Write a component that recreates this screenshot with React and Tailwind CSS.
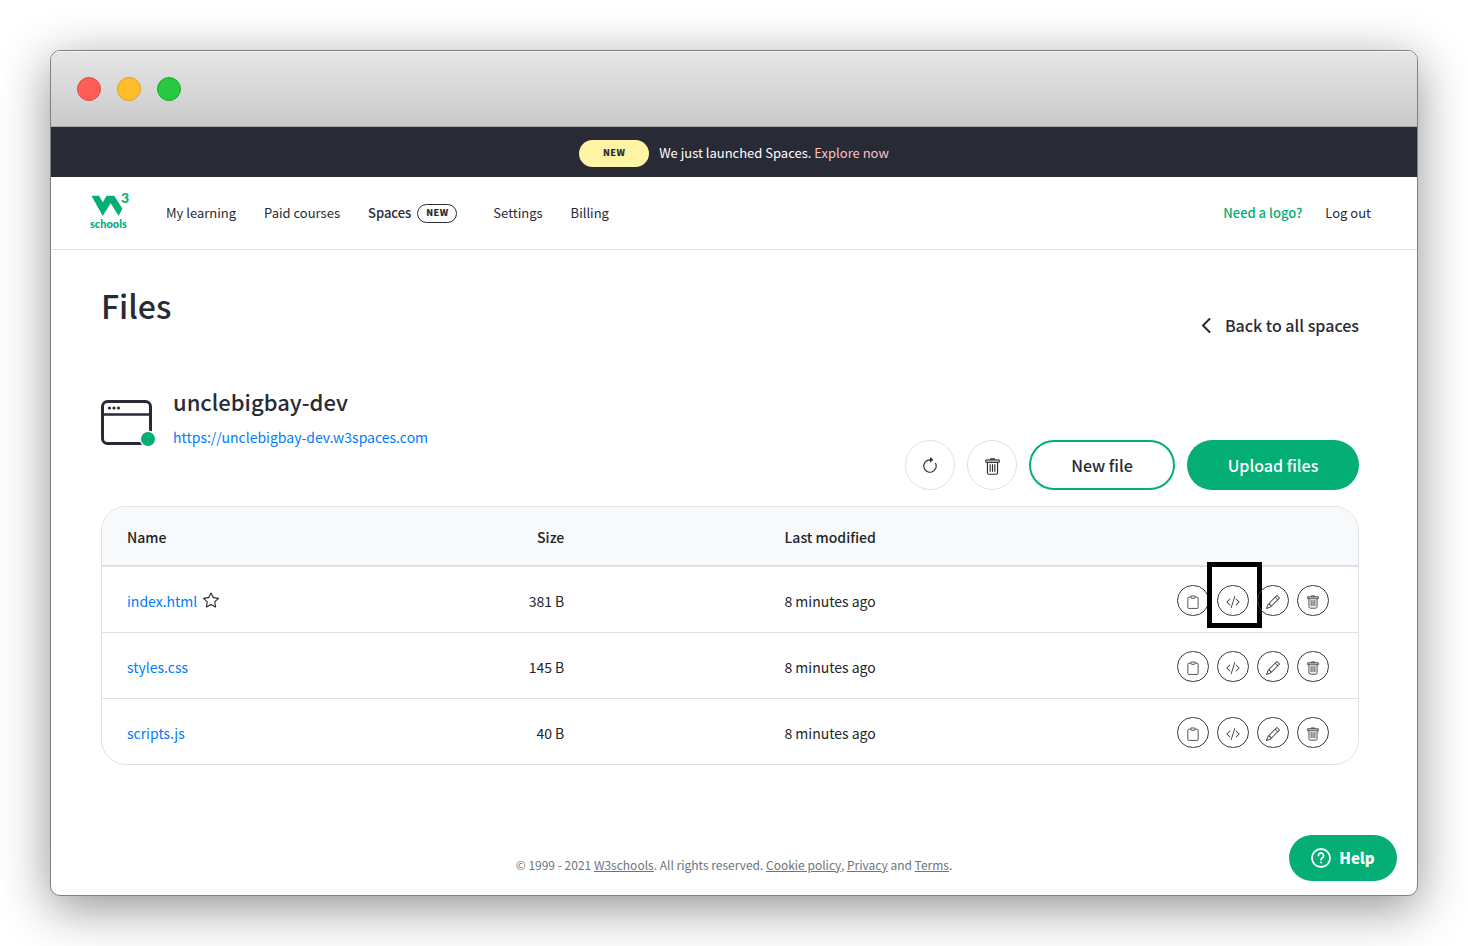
import { BsArrowClockwise, BsCodeSlash, BsPencil, BsStar } from 'react-icons/bs';

const files = [
  { name: 'index.html', size: '381 B', modified: '8 minutes ago', starred: true },
  { name: 'styles.css', size: '145 B', modified: '8 minutes ago' },
  { name: 'scripts.js', size: '40 B', modified: '8 minutes ago' },
];

function TrashIcon({ className = '' }) {
  return (
    <svg viewBox="0 0 16 18" fill="none" stroke="currentColor" className={className} aria-hidden="true">
      <path d="M5.5 1h5" strokeWidth="1.6" />
      <rect x=".7" y="1.9" width="14.6" height="2.8" rx=".5" fill="currentColor" fillOpacity=".35" />
      <path d="M2.6 4.7v10.6c0 1.100.7 1.900 1.700 1.900h7.400c1 0 1.700-.8 1.700-1.900V4.700" strokeWidth="1.200" />
      <path d="M5.500 6.500v8M8 6.500v8M10.500 6.500v8" strokeWidth="1.200" />
    </svg>
  );
}

function ClipboardIcon({ className = '' }) {
  return (
    <svg viewBox="0 0 14 16" fill="none" stroke="currentColor" className={className} aria-hidden="true">
      <path d="M4 2.5H2a1 1 0 0 0-1 1v11a1 1 0 0 0 1 1h10a1 1 0 0 0 1-1v-11a1 1 0 0 0-1-1h-2" />
      <path d="M4.5 1h5v1.5a1.2 1.2 0 0 1-1.2 1.2H5.7a1.2 1.2 0 0 1-1.2-1.2Z" />
    </svg>
  );
}

function Logo() {
  return (
    <svg viewBox="0 -4 44 46" className="h-[46px] w-11" fill="#04AE75" role="img" aria-label="W3Schools">
      <path d="M1.5 3.7H9l3.8 6.600L16.500 3.700h7.800l8 12.800L28.700 24l-8-12.800L12.700 24Z" />
      <text x="31" y="10.500" fontFamily="Lato" fontWeight="900" fontSize="14">3</text>
      <text x="0" y="35.500" fontFamily="Lato" fontWeight="900" fontSize="11">schools</text>
    </svg>
  );
}

function SiteIcon() {
  return (
    <svg viewBox="0 0 56 48" className="h-12 w-14" fill="none" aria-hidden="true">
      <rect x="1.5" y="2.5" width="48" height="42" rx="5" stroke="#282A35" strokeWidth="3" />
      <path d="M2 15.500h47" stroke="#282A35" strokeWidth="2.500" />
      <circle cx="8.500" cy="9" r="1.600" fill="#282A35" />
      <circle cx="13" cy="9" r="1.600" fill="#282A35" />
      <circle cx="17.500" cy="9" r="1.600" fill="#282A35" />
      <circle cx="47" cy="40" r="8.500" fill="#fff" />
      <circle cx="47" cy="40" r="7" fill="#04AE75" />
    </svg>
  );
}

function RowButton({ label, highlighted, children }) {
  return (
    <div className="relative">
      <button
        type="button"
        aria-label={label}
        className="flex h-[31px] w-8 items-center justify-center rounded-full border border-[#343a40] pt-[2px] text-[#343a40]"
      >
        {children}
      </button>
      {highlighted && (
        <div className="pointer-events-none absolute -top-[23px] -left-[10px] h-[66px] w-[55px] border-[5px] border-black" />
      )}
    </div>
  );
}

function FileRow({ file }) {
  return (
    <tr className="h-[66px]">
      <td className="border-t border-[#dee2e6] pt-[2px] pl-[25px]">
        <div className="flex items-center gap-[6px]">
          <a href="#" className="text-[#007bff]">{file.name}</a>
          {file.starred && <BsStar className="mb-[2px] h-4 w-4" />}
        </div>
      </td>
      <td className="border-t border-[#dee2e6] pt-[2px] pr-[25px] text-right">{file.size}</td>
      <td className="border-t border-[#dee2e6] pt-[2px] pr-[25px] text-right">{file.modified}</td>
      <td className="border-t border-[#dee2e6] pt-[2px] pr-[29px]">
        <div className="flex justify-end gap-2">
          <RowButton label={`Copy ${file.name}`}><ClipboardIcon className="h-[14px] w-3" /></RowButton>
          <RowButton label={`View code of ${file.name}`} highlighted={file.starred}><BsCodeSlash className="h-[14px] w-[14px]" /></RowButton>
          <RowButton label={`Rename ${file.name}`}><BsPencil className="h-[14px] w-[14px]" /></RowButton>
          <RowButton label={`Delete ${file.name}`}><TrashIcon className="h-[14px] w-3" /></RowButton>
        </div>
      </td>
    </tr>
  );
}

function TitleBar() {
  return (
    <div className="flex h-[76px] items-center gap-4 border-b border-[#a8a8a8] bg-linear-to-b from-[#e6e6e6] to-[#cacaca] px-[26px] shadow-[inset_0_1px_0_#f5f5f5]">
      <span className="h-6 w-6 rounded-full border border-[#e2463f] bg-[#ff5f57]" />
      <span className="h-6 w-6 rounded-full border border-[#e1a116] bg-[#ffbd2e]" />
      <span className="h-6 w-6 rounded-full border border-[#12ac28] bg-[#28c940]" />
    </div>
  );
}

export default function App() {
  return (
    <div className="bg-white p-[50px] font-['Noto_Sans_CJK_SC',sans-serif] text-[#282A35]">
      <div className="relative overflow-hidden rounded-[10px] border border-[#808080] bg-white shadow-[0_12px_50px_rgba(0,0,0,0.43)]">
        <TitleBar />

        <div className="flex h-[50px] items-center justify-center gap-[10px] bg-[#282A35] pt-[2px] text-[13px] text-white">
          <span className="flex h-[27px] w-[70px] items-center justify-center rounded-full bg-[#FFF4A3] text-[9px] font-black tracking-wider text-[#282A35]">NEW</span>
          <p>We just launched Spaces. <a href="#" className="text-[#FFC0C7]">Explore now</a></p>
        </div>

        <header className="flex h-[73px] items-center justify-between border-b border-[#dee2e6] pr-[46px] pl-[39px] text-[13px]">
          <nav className="flex items-center gap-7" aria-label="Main">
            <a href="#" className="mr-1 pb-1"><Logo /></a>
            <a href="#">My learning</a>
            <a href="#">Paid courses</a>
            <a href="#" className="mr-2 flex items-center gap-[6px] font-medium">
              Spaces
              <span className="flex h-[19px] w-10 items-center justify-center rounded-full border border-[#282A35] text-[9px] font-black tracking-wider">NEW</span>
            </a>
            <a href="#">Settings</a>
            <a href="#">Billing</a>
          </nav>
          <div className="flex items-center gap-[23px]">
            <a href="#" className="font-medium text-[#04AE75]">Need a logo?</a>
            <a href="#">Log out</a>
          </div>
        </header>

        <main className="pt-[35px] pr-[58px] pl-[50px]">
          <div className="flex justify-between">
            <h1 className="text-[32px] leading-10 font-medium">Files</h1>
            <a href="#" className="mt-7 flex items-center gap-[14px] text-base leading-6 font-medium">
              <svg viewBox="0 0 10 16" className="h-4 w-[10px]" fill="none" stroke="currentColor" strokeWidth="2" strokeLinecap="round" strokeLinejoin="round" aria-hidden="true">
                <path d="M8.500 2 2 8.500 8.500 15" />
              </svg>
              Back to all spaces
            </a>
          </div>

          <div className="mt-[50px] flex items-end justify-between">
            <div className="flex gap-4 self-start">
              <div className="pt-3"><SiteIcon /></div>
              <div>
                <h2 className="text-[22px] leading-7 font-medium">unclebigbay-dev</h2>
                <a href="#" className="mt-[10px] block text-sm leading-6 text-[#007bff]">https://unclebigbay-dev.w3spaces.com</a>
              </div>
            </div>
            <div className="flex gap-3 pt-[53px]">
              <button type="button" aria-label="Refresh" className="flex h-[50px] w-[50px] items-center justify-center rounded-full border border-[#dee2e6] pt-[2px]">
                <BsArrowClockwise className="h-[18px] w-[18px]" />
              </button>
              <button type="button" aria-label="Delete" className="flex h-[50px] w-[50px] items-center justify-center rounded-full border border-[#dee2e6] pt-[3px]">
                <TrashIcon className="h-[17px] w-[15px]" />
              </button>
              <button type="button" className="h-[50px] w-[146px] rounded-full border-2 border-[#04AE75] text-base font-medium">New file</button>
              <button type="button" className="h-[50px] w-[172px] rounded-full bg-[#04AE75] text-base font-medium text-white">Upload files</button>
            </div>
          </div>

          <div className="mt-4 overflow-hidden rounded-[25px] border border-[#dee2e6]">
            <table className="w-full table-fixed border-separate border-spacing-0 text-sm text-[#212529]">
              <thead className="bg-[#f8f9fb]">
                <tr className="h-[59px]">
                  <th className="w-[20%] border-b border-[#dee2e6] pt-[2px] pl-[25px] text-left font-medium">Name</th>
                  <th className="w-[18.8%] border-b border-[#dee2e6] pt-[2px] pr-[25px] text-right font-medium">Size</th>
                  <th className="w-[24.8%] border-b border-[#dee2e6] pt-[2px] pr-[25px] text-right font-medium">Last modified</th>
                  <th className="border-b border-[#dee2e6]" aria-label="Actions" />
                </tr>
              </thead>
              <tbody>
                {files.map((file) => <FileRow key={file.name} file={file} />)}
              </tbody>
            </table>
          </div>
        </main>

        <footer className="mt-[90px] pb-5 text-center text-xs leading-5 text-[#6c757d]">
          © 1999 - 2021 <a href="#" className="underline">W3schools</a>. All rights reserved. <a href="#" className="underline">Cookie policy</a>, <a href="#" className="underline">Privacy</a> and <a href="#" className="underline">Terms</a>.
        </footer>

        <button type="button" className="absolute right-5 bottom-[14px] flex h-[46px] w-[108px] items-center justify-center gap-2 rounded-full bg-[#04AE75] text-[15px] font-black text-white">
          <svg viewBox="0 0 20 20" className="h-5 w-5" fill="none" stroke="currentColor" strokeWidth="1.8" strokeLinecap="round" strokeLinejoin="round" aria-hidden="true">
            <circle cx="10" cy="10" r="9" />
            <path d="M7.400 7.600a2.600 2.600 0 1 1 3.900 2.300c-.8.500-1.300.9-1.300 1.800M10 14.500v.1" />
          </svg>
          Help
        </button>
      </div>
    </div>
  );
}
